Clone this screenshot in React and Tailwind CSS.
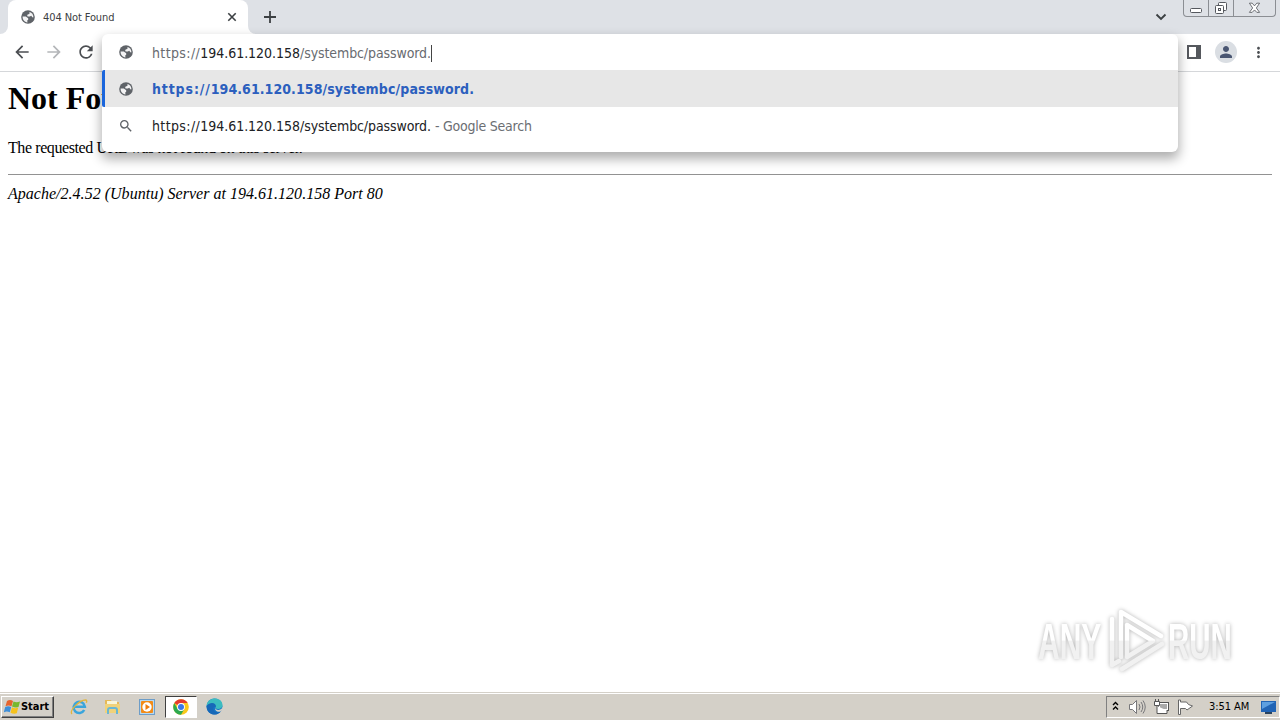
import { MdArrowBack, MdArrowForward, MdMoreVert, MdPerson, MdRefresh, MdSearch } from "react-icons/md";

const UI_FONT = "font-['DejaVu_Sans_Condensed','DejaVu_Sans',sans-serif]";

function GlobeIcon() {
  return (
    <svg width="16" height="16" viewBox="0 0 16 16">
      <circle cx="8" cy="8" r="6.800" fill="#5f6368" />
      <path d="M2.600 7.600h3.200l2.400 1.700v1.500l-1 .8.300 1.800C4.500 13.200 2.500 10.800 2.600 7.600z" fill="#f3f3f4" />
      <path d="M9.500 2.900c2.400.6 3.900 2.700 3.900 5-.3.900-.8.700-1.200.1l-1-1.200-1.400.6H7.600l-.5-1.300 1.200-.9 1.100-.1z" fill="#f3f3f4" />
    </svg>
  );
}

function TabStrip() {
  return (
    <header className="flex h-[34px] items-start bg-[#dee1e6]">
      <div className="flex h-[34px] w-2 items-end bg-white">
        <div className="h-full w-full rounded-br-lg bg-[#dee1e6]" />
      </div>
      <div className="flex h-[34px] w-[240px] items-center rounded-t-lg bg-white pr-[11px] pl-3">
        <GlobeIcon />
        <span className="mt-[2px] ml-[7px] flex-1 text-[11px] tracking-[-0.1px] text-[#3c4043]">404 Not Found</span>
        <svg width="10" height="10" viewBox="0 0 10 10" fill="none" stroke="#3c4043" strokeWidth="1.600">
          <path d="m1.300 1.300 7.400 7.400M8.700 1.300 1.300 8.700" />
        </svg>
      </div>
      <div className="h-[34px] w-2 bg-white">
        <div className="h-full w-full rounded-bl-lg bg-[#dee1e6]" />
      </div>
      <svg width="12" height="12" viewBox="0 0 12 12" fill="none" stroke="#3c4043" strokeWidth="1.800" className="mt-[11px] ml-[8px]">
        <path d="M6 0v12M0 6h12" />
      </svg>
      <svg width="12" height="8" viewBox="0 0 12 8" fill="none" stroke="#3c4043" strokeWidth="1.900" className="mt-[13px] mr-[3px] ml-auto">
        <path d="m1.500 1.500 4.500 4.500 4.500-4.500" />
      </svg>
      <WindowButtons />
    </header>
  );
}

function WindowButtons() {
  return (
    <div className="mr-[4px] ml-[13px] flex h-[17px] w-[93px] rounded-b-[4px] border border-t-0 border-[#8b8e93]">
      <div className="flex w-[25px] items-center justify-center border-r border-[#8b8e93]">
        <svg width="13" height="6" viewBox="0 0 13 6" className="mt-[5px]">
          <rect x="0.5" y="0.5" width="11" height="4" rx="1" fill="#fff" stroke="#55585e" />
        </svg>
      </div>
      <div className="flex w-[25px] items-center justify-center border-r border-[#8b8e93]">
        <svg width="14" height="14" viewBox="0 0 14 14" fill="#fff" stroke="#55585e">
          <rect x="4.5" y="1.5" width="8" height="8" rx="1" />
          <rect x="1.5" y="4.5" width="8" height="8" rx="1" />
          <rect x="4.5" y="7.5" width="2" height="2" />
        </svg>
      </div>
      <div className="flex flex-1 items-center justify-center">
        <svg width="13" height="12" viewBox="0 0 14 12">
          <path d="M1.500.8h3L7 3.700 9.500.8h3L9 6l3.500 4.700h-3L7 8.100l-2.500 2.600h-3L5 6z" fill="#fff" stroke="#55585e" strokeWidth="0.9" />
        </svg>
      </div>
    </div>
  );
}

function Toolbar() {
  return (
    <div className="flex h-[38px] items-center border-b border-[#d5d7da] bg-white pr-[13px] pb-px pl-[12px] text-[#5f6368]">
      <MdArrowBack className="size-5 text-[#4b4e52]" />
      <MdArrowForward className="ml-3 size-5 text-[#b4b6b9]" />
      <MdRefresh className="ml-3 size-5 text-[#4b4e52]" />
      <svg width="14" height="14" viewBox="0 0 14 14" className="ml-auto">
        <path fillRule="evenodd" d="M0 0h14v14H0zM2 2v10h7V2z" fill="#55585d" />
      </svg>
      <div className="ml-[14px] flex size-[22px] items-center justify-center rounded-full bg-[#dadee3]">
        <MdPerson className="size-[18px] text-[#4a5672]" />
      </div>
      <MdMoreVert className="ml-[13px] size-[17px] text-[#4b4e52]" />
    </div>
  );
}

function Omnibox() {
  return (
    <div className="absolute top-[34px] left-[102px] h-[118px] w-[1076px] rounded-md bg-white text-[14px] shadow-[0_6px_12px_1px_rgba(0,0,0,0.32)]">
      <div className="flex h-[36px] items-center rounded-t-md pl-4 text-[#686b70]">
        <GlobeIcon />
        <div className="mt-[2px] ml-[18px] flex items-center whitespace-pre">
          <span className="tracking-[0.38px]">https://</span>
          <span className="tracking-[-0.02px] text-[#202124]">194.61.120.158</span>
          <span className="tracking-[-0.1px]">/systembc/password.</span>
          <span className="h-[17px] w-px bg-[#444]" />
        </div>
      </div>
      <div className="flex h-[37px] items-center rounded-l-[2px] border-l-[3px] border-[#1a65dc] bg-[#e7e7e7] pl-[13px]">
        <GlobeIcon />
        <div className="mt-[2px] ml-[18px] flex font-bold text-[#2c5fbe]">
          <span className="tracking-[0.87px]">https://</span>
          <span className="tracking-[0.07px]">194.61.120.158</span>
          <span className="tracking-[0.12px]">/systembc/password.</span>
        </div>
      </div>
      <div className="flex h-[37px] items-center pl-4">
        <MdSearch className="size-4 text-[#5f6368]" />
        <div className="mt-[2px] ml-[18px] flex whitespace-pre text-[#202124]">
          <span className="tracking-[0.38px]">https://</span>
          <span className="tracking-[-0.02px]">194.61.120.158</span>
          <span className="tracking-[-0.1px]">/systembc/password.</span>
          <span className="ml-1 tracking-[-0.23px] text-[#6b6e73]">- Google Search</span>
        </div>
      </div>
    </div>
  );
}

function ErrorPage() {
  return (
    <main className="flex-1 overflow-hidden bg-white px-2 font-['Liberation_Serif',serif] text-[16px] leading-[18px] text-black">
      <h1 className="mt-[8px] text-[32px] leading-[37px] font-bold">Not Found</h1>
      <p className="mt-[22px] tracking-[-0.41px]">The requested URL was not found on this server.</p>
      <hr className="mt-[17px] border-t border-[#929292]" />
      <address className="mt-[10px] tracking-[0.02px] italic">Apache/2.4.52 (Ubuntu) Server at 194.61.120.158 Port 80</address>
    </main>
  );
}

function Watermark() {
  return (
    <div className="absolute top-[603px] left-[1028px] drop-shadow-[0_0_2px_rgba(0,0,0,0.3)]">
      <svg width="230" height="78" viewBox="-10 -4 230 78" fontFamily="Liberation Sans, sans-serif" fontSize="50" fill="url(#shine)">
        <defs>
          <linearGradient id="shine" gradientUnits="userSpaceOnUse" x1="0" y1="0" x2="0" y2="66">
            <stop offset="0.5" stopColor="#fff" />
            <stop offset="0.52" stopColor="#f1f1f1" />
          </linearGradient>
        </defs>
        <text transform="scale(0.6 1)" x="0" y="52" fontWeight="bold">ANY</text>
        <text transform="translate(130 0) scale(0.59 1)" x="0" y="52" fontWeight="bold">RUN</text>
        <g fill="none" stroke="url(#shine)" strokeWidth="4.500" strokeLinejoin="round" strokeLinecap="round">
          <path d="M83 50V5l40 24M84 62l40-25" />
          <path d="M74 12v46l7-4" />
          <path d="M89 18v32l26-16z" />
        </g>
      </svg>
    </div>
  );
}

function WindowsFlag() {
  return (
    <svg width="17" height="16" viewBox="0 0 17 16">
      <path d="M3 2q3-2 6 0L7.500 7.300q-3-1.500-6 0z" fill="#e5632d" />
      <path d="M9.500 2.500q3 1.500 6.500 0L14.500 8q-3 1-6.500-.5z" fill="#77b82f" />
      <path d="M1.200 8q3-1.500 6 0L5.800 13.300q-3-1.500-6 0z" fill="#3d8ed8" />
      <path d="M8 8.300q3 1.500 6.200.3L12.800 14.300q-3 1-6.300-.5z" fill="#f6c21c" />
    </svg>
  );
}

function ExplorerE() {
  return (
    <svg width="18" height="18" viewBox="0 0 18 18" fill="none">
      <path d="M14.200 12a5.600 5.600 0 1 1 .6-3.300H5" stroke="#3aa5dc" strokeWidth="2.600" />
      <path d="M2 16C-1 13 9 2 15.500 2c1.500 0 1.500 1.500.8 2.800" stroke="#e2b53c" strokeWidth="1.300" />
    </svg>
  );
}

function FolderIcon() {
  return (
    <svg width="17" height="17" viewBox="0 0 17 17">
      <path d="M1 2h6l1 2h7v11H1z" fill="#e5b959" />
      <path d="M3 3h10v6H3z" fill="#f8f5d8" />
      <path d="M1 6h15v9H1z" fill="#f0d27a" />
      <path d="M4 16v-4q0-2 2-2h5q2 0 2 2v4" fill="none" stroke="#68b7d5" strokeWidth="2" />
    </svg>
  );
}

function MediaPlayerIcon() {
  return (
    <svg width="16" height="16" viewBox="0 0 16 16">
      <rect x="0.500" y="0.500" width="15" height="15" fill="#b6d9f3" stroke="#6d9dc8" />
      <rect x="2" y="2" width="12" height="12" rx="1" fill="#f28b18" />
      <circle cx="8" cy="8" r="4.700" fill="#fff" />
      <path d="M6.500 5v6L11 8z" fill="#ed7c0f" />
    </svg>
  );
}

function ChromeIcon() {
  return (
    <svg width="16" height="16" viewBox="0 0 16 16">
      <circle cx="8" cy="8" r="7.800" fill="#f9c81a" />
      <path d="M8 8 1.250 4.100A7.800 7.800 0 0 1 14.750 4.100H8z" fill="#e33b2e" />
      <path d="M1.250 4.100A7.800 7.800 0 0 0 8 15.800l3.400-5.900L8 8 4.600 9.900z" fill="#2da94f" />
      <circle cx="8" cy="8" r="3.900" fill="#fff" />
      <circle cx="8" cy="8" r="3" fill="#3978e8" />
    </svg>
  );
}

function EdgeIcon() {
  return (
    <svg width="17" height="17" viewBox="0 0 17 17">
      <circle cx="8.500" cy="8.500" r="8" fill="#1676c5" />
      <path d="M.6 8C1-1.500 16-2 16.500 7c.2 4-5 5-7 3 2-4-4-7-8.900-2z" fill="#3bbcc0" />
      <path d="M.6 8c4-5 10-3 9 1-1-1-3 .5-2 3 1.500 3 5 3 7.500 1-5 7-15 3-14.500-5z" fill="#1768b8" />
      <path d="M9.500 9c-1 2 1.500 3.500 4 2.700 2-.5 3-2 3-3.500V12l-2 1.500c-3 1-6.500-1-5-4.500z" fill="#d4d0c8" />
    </svg>
  );
}

function Tray() {
  return (
    <div className="ml-auto flex h-[22px] w-[174px] items-center border border-t-[#808080] border-r-white border-b-white border-l-[#808080] pl-[5px]">
      <svg width="7" height="10" viewBox="0 0 7 10" fill="none" stroke="#000" strokeWidth="1.400" className="mb-[2px]">
        <path d="m1 4 2.500-2.500L6 4M1 8.500 3.500 6 6 8.500" />
      </svg>
      <svg width="17" height="16" viewBox="0 0 17 16" className="ml-[10px]" fill="#fff" stroke="#77777a">
        <path d="M.5 5.500h3l4-4v13l-4-4h-3z" />
        <path d="M10 5q2 3 0 6M12 3q3.500 5 0 10M14 1.500q4.500 6.500 0 13" fill="none" />
      </svg>
      <svg width="17" height="16" viewBox="0 0 17 16" className="ml-[7px]" fill="#fff" stroke="#555">
        <rect x="5.500" y="3.500" width="10" height="8" />
        <path d="M7 5h7v5H7z" fill="#aaa" stroke="none" />
        <path d="M1.500 2.500h5v4h-5zM2.500 0v2M5.500 0v2M4 7v7.500h10v-3" />
      </svg>
      <svg width="17" height="16" viewBox="0 0 17 16" className="ml-[7px]" fill="#fff" stroke="#666">
        <path d="M1.500 1v14.500h2V9.500h5l1.500 1.500 5.500-4-4-1.500-2-2.500h-6V1z" />
      </svg>
      <span className="mt-[2px] ml-[15px] flex-1 text-[11px] tracking-[-0.05px] whitespace-nowrap">3:51 AM</span>
      <svg width="17" height="16" viewBox="0 0 17 16" className="mr-[2px]">
        <path d="M1 2h15v11H1z" fill="#2164b5" />
        <path d="M2 3h13L2 10z" fill="#5d9fe0" />
        <path d="M5 13h7v2H5z" fill="#29435f" />
      </svg>
    </div>
  );
}

function Taskbar() {
  return (
    <footer className="flex h-[28px] items-center border-t border-[#d4d0c8] bg-[#d4d0c8] pl-px shadow-[inset_0_1px_0_#fff]">
      <div className="flex h-[22px] w-[53px] items-center border border-t-white border-r-[#404040] border-b-[#404040] border-l-white pl-[2px] shadow-[inset_-1px_-1px_0_#808080]">
        <WindowsFlag />
        <span className="mt-px text-[11px] font-bold tracking-[-0.05px]">Start</span>
      </div>
      <div className="flex items-center pl-4">
        <ExplorerE />
        <div className="ml-4"><FolderIcon /></div>
        <div className="ml-[18px]"><MediaPlayerIcon /></div>
        <div className="ml-[10px] flex h-[22px] w-[32px] items-center justify-center border border-t-[#404040] border-r-white border-b-white border-l-[#404040] bg-white">
          <ChromeIcon />
        </div>
        <div className="ml-[9px]"><EdgeIcon /></div>
      </div>
      <Tray />
    </footer>
  );
}

export default function App() {
  return (
    <div className={`relative flex h-[720px] w-[1280px] flex-col overflow-hidden bg-white text-black ${UI_FONT}`}>
      <TabStrip />
      <Toolbar />
      <ErrorPage />
      <Taskbar />
      <Omnibox />
      <Watermark />
    </div>
  );
}
